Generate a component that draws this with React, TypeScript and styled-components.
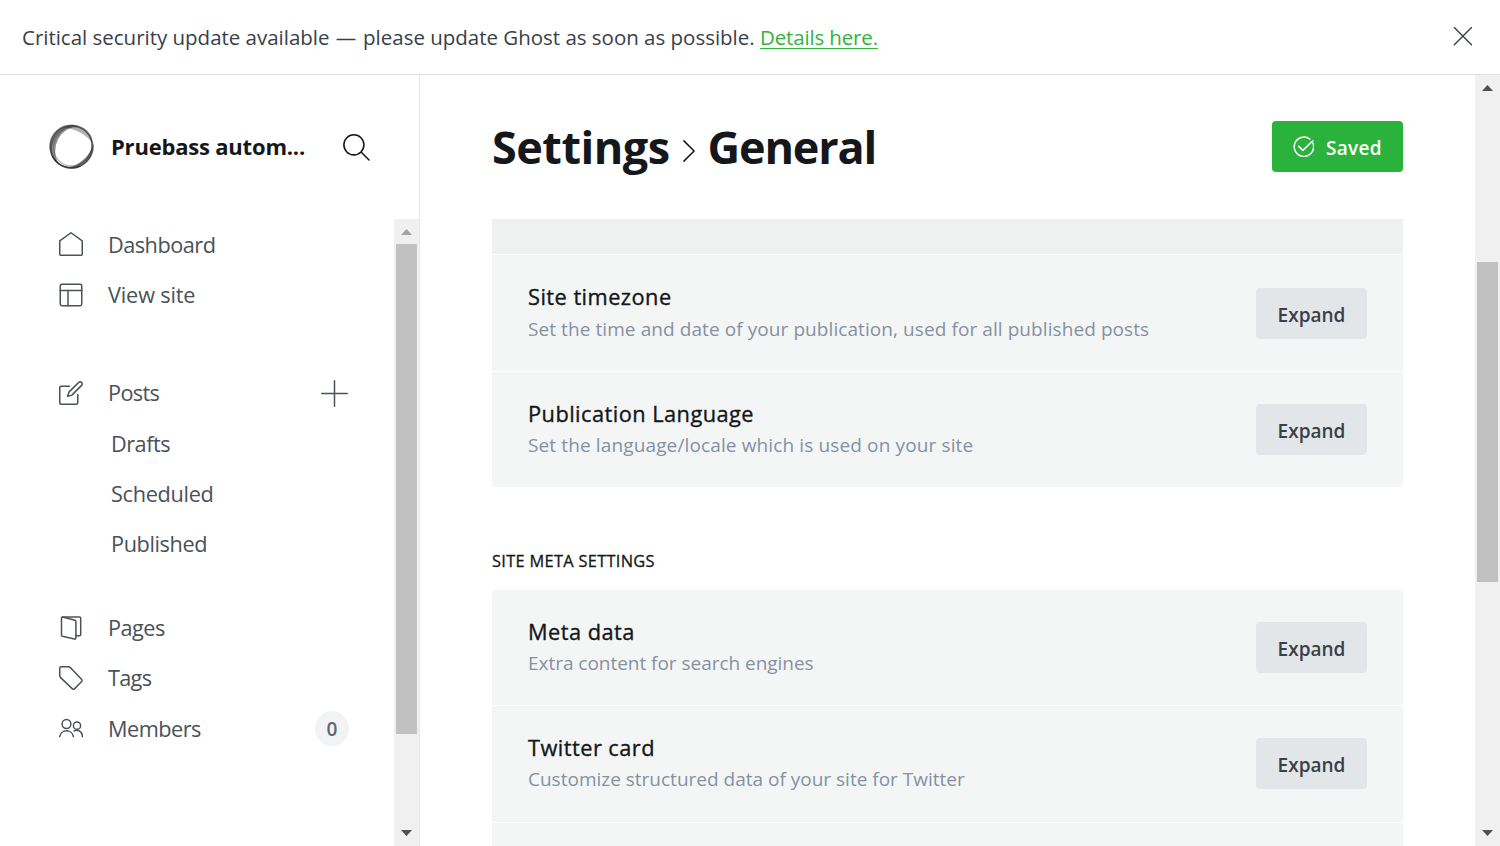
import React from "react";
import styled, { createGlobalStyle } from "styled-components";

const GlobalStyle = createGlobalStyle`
  * { box-sizing: border-box; }
  body { margin: 0; background: #fff; font-family: "Segoe UI", "Open Sans", "Noto Sans", sans-serif; color: #15171a; }
  h1, h2, h3, h4, p { margin: 0; }
  button { font-family: inherit; border: 0; padding: 0; background: none; }
  svg { display: block; flex: none; }
`;

const Page = styled.div`
  width: 1500px;
  height: 846px;
  display: flex;
  flex-direction: column;
  overflow: hidden;
`;

const Banner = styled.header`
  flex: none;
  height: 75px;
  padding: 0 28px 0 22px;
  border-bottom: 1px solid #dddfe0;
  display: flex;
  align-items: center;
  justify-content: space-between;
  font-size: 20.5px;
  letter-spacing: -0.015px;
  color: #394047;
  white-space: nowrap;
  svg { margin-bottom: 2px; }
`;

const Dash = styled.span`
  margin: 0 1.5px 0 1px;
`;

const BannerLink = styled.a`
  color: #30b43c;
  letter-spacing: -0.15px;
  text-decoration: underline;
  text-underline-offset: 3px;
  text-decoration-thickness: 1px;
`;

const Body = styled.div`
  flex: 1;
  min-height: 0;
  display: flex;
`;

const Sidebar = styled.aside`
  width: 420px;
  flex: none;
  border-right: 1px solid #e5e7e8;
  display: flex;
  flex-direction: column;
`;

const Brand = styled.div`
  height: 144px;
  flex: none;
  padding: 0 0 1px 49px;
  display: flex;
  align-items: center;
`;

const SiteName = styled.h2`
  width: 195px;
  margin: 0 37px 0 17px;
  padding-bottom: 1px;
  font-size: 22px;
  font-weight: 700;
  letter-spacing: -0.2px;
  white-space: nowrap;
`;

const NavArea = styled.div`
  flex: 1;
  min-height: 0;
  display: flex;
`;

const Nav = styled.nav`
  flex: 1;
  padding: 1px 45px 0 59px;
`;

const NavGroup = styled.div<{ $gap?: number }>`
  margin-bottom: ${(p) => p.$gap ?? 0}px;
`;

const NavItem = styled.div<{ $sub?: boolean }>`
  height: 50.2px;
  padding-left: ${(p) => (p.$sub ? 27 : 0)}px;
  display: flex;
  align-items: center;
  font-size: 21.7px;
  color: #4a5159;
`;

const NavLabel = styled.span<{ $track?: number; $low?: boolean }>`
  flex: 1;
  margin-left: 25px;
  padding-bottom: ${(p) => (p.$low ? 0.6 : 2)}px;
  letter-spacing: ${(p) => p.$track ?? -0.5}px;
`;

const Count = styled.span`
  width: 34px;
  height: 35px;
  margin-bottom: 1px;
  padding-top: 1px;
  border-radius: 50%;
  background: #f1f3f4;
  color: #5d6873;
  display: flex;
  align-items: center;
  justify-content: center;
  font-size: 19px;
  font-weight: 600;
`;

const Track = styled.div`
  width: 25px;
  flex: none;
  background: #f0f0f0;
  display: flex;
  flex-direction: column;
  align-items: center;
`;

const TrackButton = styled.div<{ $down?: boolean }>`
  height: 25px;
  flex: none;
  padding-top: ${(p) => (p.$down ? 9 : 10)}px;
`;

const Arrow = styled.div<{ $down?: boolean; $color: string }>`
  width: 11px;
  height: 6px;
  background: ${(p) => p.$color};
  clip-path: ${(p) => (p.$down ? "polygon(0 0, 100% 0, 50% 100%)" : "polygon(50% 0, 100% 100%, 0 100%)")};
`;

const TrackBody = styled.div<{ $offset: number }>`
  flex: 1;
  padding-top: ${(p) => p.$offset}px;
`;

const Thumb = styled.div<{ $size: number }>`
  width: 21px;
  height: ${(p) => p.$size}px;
  background: #c1c1c1;
`;

const Main = styled.main`
  flex: 1;
  min-width: 0;
  padding: 0 72px;
  display: flex;
  flex-direction: column;
`;

const TitleBar = styled.div`
  height: 144px;
  flex: none;
  padding-bottom: 1px;
  display: flex;
  align-items: center;
  justify-content: space-between;
`;

const Title = styled.h1`
  display: flex;
  align-items: center;
  padding-top: 1px;
  font-size: 45px;
  line-height: 60px;
  font-weight: 700;
  letter-spacing: -0.5px;
  svg { margin: 8px 13px 0 13px; }
`;

const TitlePage = styled.span`
  letter-spacing: -1.15px;
`;

const SaveButton = styled.button`
  width: 131px;
  height: 51px;
  border-radius: 4px;
  background: #2bb23c;
  color: #fff;
  display: flex;
  align-items: center;
  justify-content: center;
  gap: 12px;
  font-size: 19px;
  font-weight: 600;
  letter-spacing: 0.3px;
  svg { margin-bottom: 1px; }
`;

const SaveLabel = styled.span`
  padding-top: 2px;
`;

const Panel = styled.section<{ $open?: boolean }>`
  flex: none;
  border-radius: ${(p) => (p.$open ? "0 0 4px 4px" : "4px 4px 0 0")};
  background: #f4f6f6;
  overflow: hidden;
`;

const ClosedBand = styled.div`
  height: 35px;
  background: #eff1f1;
`;

const Row = styled.div<{ $height: number; $line?: boolean }>`
  height: ${(p) => p.$height}px;
  padding: 0 36px;
  border-top: ${(p) => (p.$line ? "1px solid #fff" : "0")};
  display: flex;
  align-items: flex-start;
  justify-content: space-between;
`;

const RowText = styled.div`
  padding-top: 26px;
  white-space: nowrap;
`;

const RowTitle = styled.h4`
  font-size: 21.8px;
  line-height: 32px;
  font-weight: 500;
  letter-spacing: 0.45px;
  -webkit-text-stroke: 0.35px currentColor;
`;

const RowNote = styled.p<{ $track: number; $drop: number }>`
  padding-top: ${(p) => p.$drop}px;
  font-size: 19px;
  line-height: 31px;
  letter-spacing: ${(p) => p.$track}px;
  color: #8591a2;
`;

const ExpandButton = styled.button<{ $drop: number }>`
  width: 111px;
  height: 51px;
  margin-top: ${(p) => 32 + p.$drop}px;
  padding-top: 2px;
  border-radius: 4px;
  background: #e3e6e9;
  color: #394047;
  font-size: 19px;
  font-weight: 600;
`;

const GroupLabel = styled.h3`
  flex: none;
  height: 103px;
  padding-top: 62px;
  font-size: 16.4px;
  line-height: 24px;
  font-weight: 500;
  letter-spacing: 0.3px;
  -webkit-text-stroke: 0.3px currentColor;
`;

const stroke = { fill: "none", stroke: "#4a5159", strokeWidth: 1.5, strokeLinecap: "round", strokeLinejoin: "round" } as const;

const HomeIcon = () => (
  <svg width="24" height="26" viewBox="0 0 24 26" {...stroke}>
    <path d="M.75 8.9 12 .75 23.25 8.9v13.4a1 1 0 0 1-1 1H1.75a1 1 0 0 1-1-1z" />
  </svg>
);
const LayoutIcon = () => (
  <svg width="24" height="24" viewBox="0 0 24 24" {...stroke}>
    <rect x="1.25" y="1.2" width="21.5" height="21.5" rx="1.6" />
    <path d="M1.25 7.4h21.5M9 7.4v15.3" />
  </svg>
);
const EditIcon = () => (
  <svg width="24" height="24" viewBox="0 0 24 24" {...stroke}>
    <path d="M10.5 5.2H2.2A1.45 1.45 0 0 0 .75 6.7v15.1a1.45 1.45 0 0 0 1.45 1.45h15.1a1.45 1.45 0 0 0 1.45-1.45V13.5" />
    <path d="M22.6 1.4a2.1 2.1 0 0 0-3 0L9.9 11.1 8.6 15.4l4.3-1.3 9.7-9.7a2.1 2.1 0 0 0 0-3z" />
  </svg>
);
const PagesIcon = () => (
  <svg width="24" height="24" viewBox="0 0 24 24" {...stroke}>
    <path d="M3.5.9h17.1a1.1 1.1 0 0 1 1.1 1.1v16.6a1.1 1.1 0 0 1-1.1 1.1h-3.4" />
    <path d="M3.6 1 16 4.3a1.3 1.3 0 0 1 .9 1.2V22a1.1 1.1 0 0 1-1.4 1.1L3.4 20.3a1.2 1.2 0 0 1-.9-1.1V1.9A1 1 0 0 1 3.6 1z" />
  </svg>
);
const TagIcon = () => (
  <svg width="24" height="24" viewBox="0 0 24 24" {...stroke}>
    <path d="M2.3.75h7.2a2.6 2.6 0 0 1 1.8.8l11.4 12a1.4 1.4 0 0 1 0 2l-7.3 7.3a1.4 1.4 0 0 1-2 0L1.6 11.6a2.8 2.8 0 0 1-.85-2V2.3A1.5 1.5 0 0 1 2.3.75z" />
  </svg>
);
const MembersIcon = () => (
  <svg width="24" height="26" viewBox="0 0 24 26" {...stroke}>
    <circle cx="7.5" cy="8" r="4.4" />
    <path d="M.75 20.6a6.9 6.9 0 0 1 13.6 0" />
    <circle cx="18" cy="9.7" r="3.6" />
    <path d="M15.2 14.9a5.6 5.6 0 0 1 8.1 5.7" />
  </svg>
);
const PlusIcon = () => (
  <svg width="28" height="27" viewBox="0 0 28 27" {...stroke}>
    <path d="M13.5.75v25.5M.75 13.5h25.5" />
  </svg>
);
const SearchIcon = () => (
  <svg width="27" height="29" viewBox="0 -2 28 30" {...stroke} stroke="#15171a" strokeWidth={1.6}>
    <circle cx="11.3" cy="11.3" r="10.4" />
    <path d="m19 19 8 8" />
  </svg>
);
const CloseIcon = () => (
  <svg width="19" height="19" viewBox="0 0 19 19" {...stroke} stroke="#394047" strokeWidth={1.4}>
    <path d="m1.3.6 17.2 17.2M18.5.6 1.3 17.8" />
  </svg>
);
const ChevronIcon = () => (
  <svg width="12" height="22" viewBox="0 0 12 22" {...stroke} stroke="#15171a">
    <path d="m.9.9 10.2 10.1L.9 21.1" />
  </svg>
);
const CheckIcon = () => (
  <svg width="21" height="21" viewBox="0 0 21 21" {...stroke} stroke="#fff">
    <path d="M19.9 7a9.7 9.7 0 1 1-3.1-4" />
    <path d="m5.8 10.4 4 4L19.9 4.8" />
  </svg>
);
const Logo = () => (
  <svg width="45" height="45" viewBox="-.5 0 45 45" fill="none">
    <g fill="#333" fillOpacity=".55">
      <path d="M10 41A22 22 0 0 1 30 2 25 25 0 0 0 10 41z" />
      <path d="M18 44A22.5 22.5 0 0 0 44.3 19 36 36 0 0 1 18 44z" />
      <path d="M13 3.4A22 22 0 0 1 43.5 20 40 32 0 0 0 13 3.4z" fillOpacity=".38" />
    </g>
    <circle cx="22" cy="22.9" r="21" stroke="#222" strokeOpacity=".55" strokeWidth="1.4" />
    <path d="M3 32A21 21 0 0 0 31 42" stroke="#222" strokeOpacity=".6" strokeWidth="1.5" />
    <ellipse cx="23" cy="23" rx="20" ry="18.6" stroke="#333" strokeOpacity=".35" strokeWidth="1.2" transform="rotate(-55 22.5 22.5)" />
    <ellipse cx="22.3" cy="22.4" rx="21.8" ry="19.2" stroke="#222" strokeOpacity=".4" strokeWidth="1" transform="rotate(-42 22.5 22.5)" />
    <ellipse cx="22.4" cy="22.8" rx="20" ry="21.6" stroke="#333" strokeOpacity=".35" strokeWidth="1" transform="rotate(25 22.5 22.5)" />
  </svg>
);

const Scrollbar = ({ offset, size, top }: { offset: number; size: number; top: string }) => (
  <Track>
    <TrackButton><Arrow $color={top} /></TrackButton>
    <TrackBody $offset={offset}><Thumb $size={size} /></TrackBody>
    <TrackButton $down><Arrow $down $color="#505050" /></TrackButton>
  </Track>
);

type SettingProps = { title: string; note: string; height: number; line?: boolean; track?: number; drop?: number };

const Setting = ({ title, note, height, line, track = 0, drop = 0 }: SettingProps) => (
  <Row $height={height} $line={line}>
    <RowText>
      <RowTitle>{title}</RowTitle>
      <RowNote $track={track} $drop={drop}>{note}</RowNote>
    </RowText>
    <ExpandButton $drop={drop}>Expand</ExpandButton>
  </Row>
);

export default function App() {
  return (
    <Page>
      <GlobalStyle />
      <Banner>
        <span>
          Critical security update available <Dash>—</Dash> please update Ghost as soon as possible. <BannerLink>Details here.</BannerLink>
        </span>
        <CloseIcon />
      </Banner>
      <Body>
        <Sidebar>
          <Brand>
            <Logo />
            <SiteName>Pruebass autom...</SiteName>
            <SearchIcon />
          </Brand>
          <NavArea>
            <Nav>
              <NavGroup $gap={48}>
                <NavItem><HomeIcon /><NavLabel>Dashboard</NavLabel></NavItem>
                <NavItem><LayoutIcon /><NavLabel $track={-0.15}>View site</NavLabel></NavItem>
              </NavGroup>
              <NavGroup $gap={34}>
                <NavItem><EditIcon /><NavLabel $track={-0.65}>Posts</NavLabel><PlusIcon /></NavItem>
                <NavItem $sub><NavLabel $low>Drafts</NavLabel></NavItem>
                <NavItem $sub><NavLabel $low $track={-0.3}>Scheduled</NavLabel></NavItem>
                <NavItem $sub><NavLabel $track={-0.4}>Published</NavLabel></NavItem>
              </NavGroup>
              <NavGroup>
                <NavItem><PagesIcon /><NavLabel>Pages</NavLabel></NavItem>
                <NavItem><TagIcon /><NavLabel $track={-0.7}>Tags</NavLabel></NavItem>
                <NavItem><MembersIcon /><NavLabel $low>Members</NavLabel><Count>0</Count></NavItem>
              </NavGroup>
            </Nav>
            <Scrollbar offset={0} size={490} top="#a3a3a3" />
          </NavArea>
        </Sidebar>
        <Main>
          <TitleBar>
            <Title>Settings<ChevronIcon /><TitlePage>General</TitlePage></Title>
            <SaveButton><CheckIcon /><SaveLabel>Saved</SaveLabel></SaveButton>
          </TitleBar>
          <Panel $open>
            <ClosedBand />
            <Setting title="Site timezone" note="Set the time and date of your publication, used for all published posts" height={117} line track={0.08} drop={1} />
            <Setting title="Publication Language" note="Set the language/locale which is used on your site" height={116} line track={0.13} />
          </Panel>
          <GroupLabel>SITE META SETTINGS</GroupLabel>
          <Panel>
            <Setting title="Meta data" note="Extra content for search engines" height={115} track={-0.03} />
            <Setting title="Twitter card" note="Customize structured data of your site for Twitter" height={117} line />
            <Row $height={117} $line />
          </Panel>
        </Main>
        <Scrollbar offset={162} size={320} top="#505050" />
      </Body>
    </Page>
  );
}
